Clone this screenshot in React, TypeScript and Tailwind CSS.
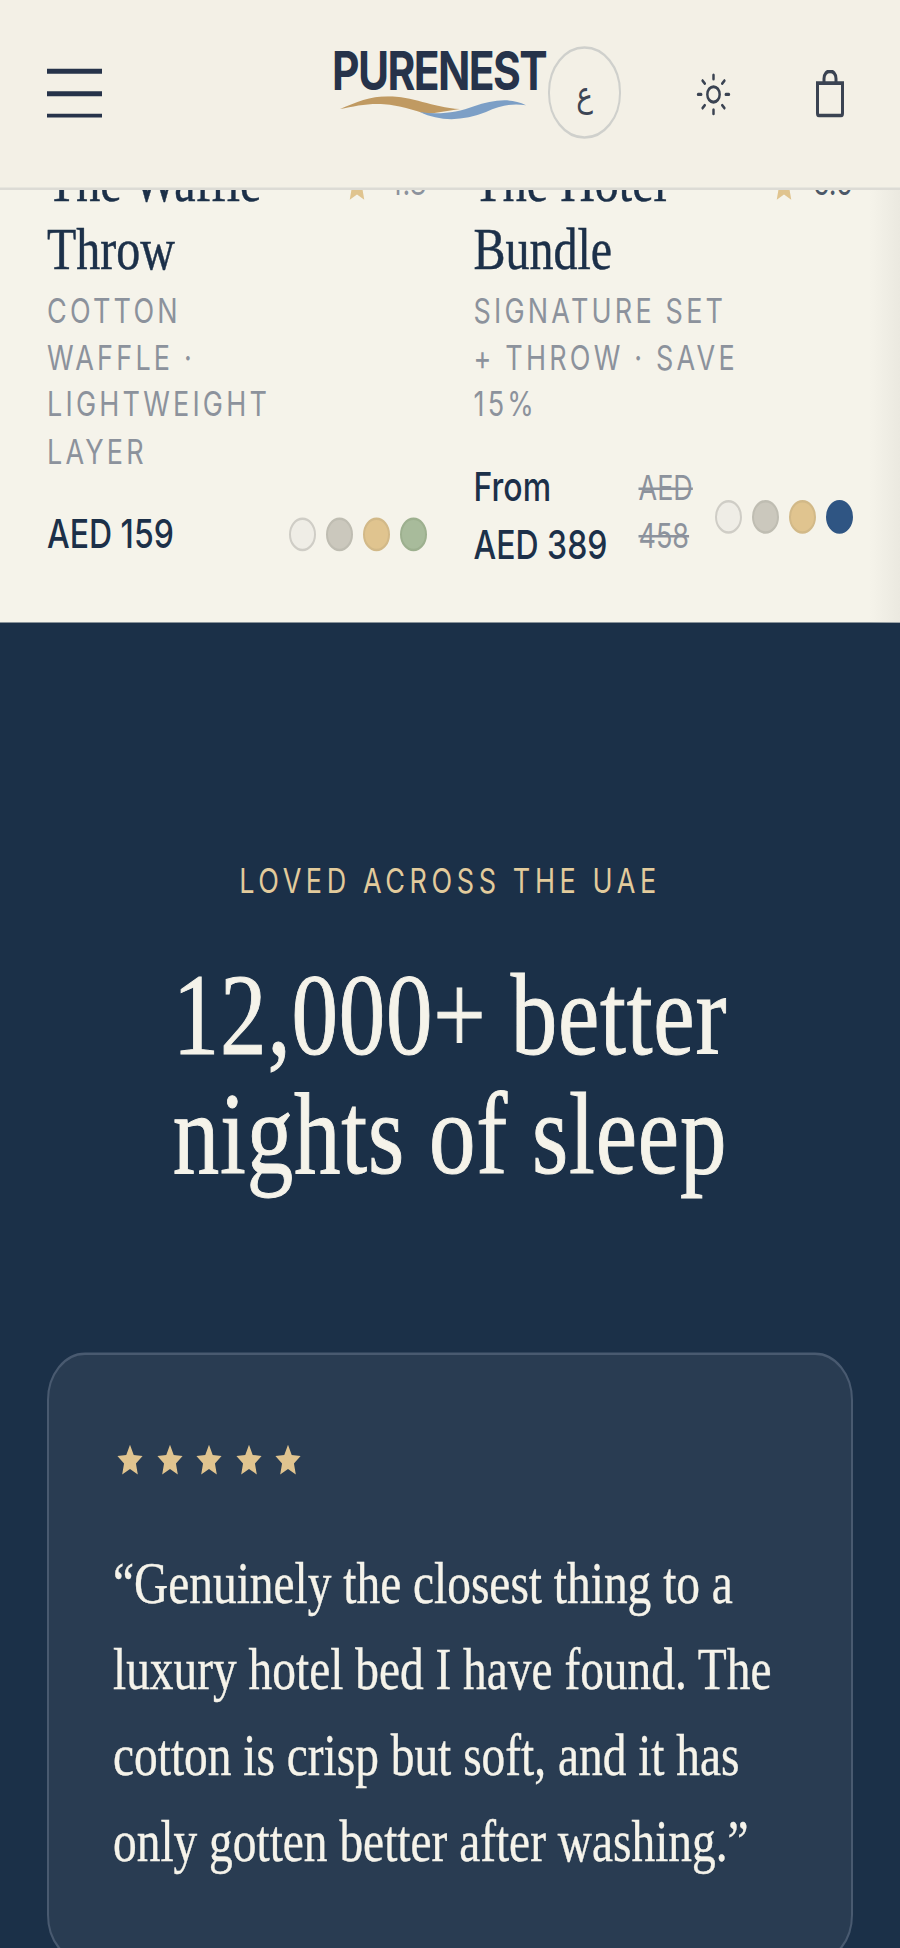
import React from "react";
import { Sun } from "lucide-react";

const serif = "font-['Liberation_Serif',serif]";
const sans = "font-['Inter',sans-serif]";

function Star({ className }: { className: string }) {
  return (
    <svg viewBox="0 0 24 24" className={className} fill="currentColor">
      <path d="M12 1.5l3.2 7 7.6.8-5.7 5.1 1.6 7.5L12 18.1l-6.7 3.8 1.6-7.5L1.2 9.3l7.6-.8z" />
    </svg>
  );
}

function Swatch({ c }: { c: string }) {
  return <span className={`block h-[27px] w-[27px] shrink-0 rounded-full border-2 ${c}`} />;
}

function Product({
  title,
  rating,
  ratingColor,
  sub,
  price,
  was,
  last,
}: {
  title: string;
  rating: string;
  ratingColor: string;
  sub: string;
  price: string;
  was?: string;
  last: string;
}) {
  return (
    <article className="min-w-0">
      <div className="flex items-start justify-between">
        <h3 className={`${serif} w-[240px] text-[48px] leading-[54px] text-[#1c3049] [-webkit-text-stroke:0.4px]`}>{title}</h3>
        <div className={`${sans} flex items-center gap-[16px] pt-[11px] text-[27px] leading-[36px] ${ratingColor}`}>
          <Star className="mt-[4px] h-[26px] w-[26px] text-[#e0c48f]" />
          <span>{rating}</span>
        </div>
      </div>
      <p className={`${sans} mt-[4px] w-[265px] text-[27px] leading-[37.6px] tracking-[3.2px] text-[#8c929c]`}>{sub}</p>
      <div className="mt-[24px] flex items-center justify-between">
        <div className={`${sans} flex items-center`}>
          <span className="w-[165px] pr-[28px] text-[32px] leading-[46.6px] font-medium text-[#1c3049]">{price}</span>
          {was && <s className="mb-[6px] w-[60px] text-[27px] leading-[38.4px] text-[#8c929c]">{was}</s>}
        </div>
        <div className="flex gap-[10px]">
          <Swatch c="border-[#cfcdc6] bg-[#efede6]" />
          <Swatch c="border-[#bfbdb2] bg-[#cbc8bd]" />
          <Swatch c="border-[#d2b988] bg-[#e0c48f]" />
          <Swatch c={last} />
        </div>
      </div>
    </article>
  );
}

export default function App() {
  return (
    <div className="h-[1948px] w-[900px] overflow-hidden bg-[#1b3048]">
      <div className="relative h-[1558.4px] origin-top scale-y-[1.25]">
        <header className="absolute inset-x-0 top-0 z-10 flex h-[152px] items-start border-b-2 border-[#dcdbd5] bg-[#f3f0e6] px-[47px] pt-[38px]">
          <div className="mt-[17px] flex w-[55px] shrink-0 flex-col gap-[14px]">
            <span className="h-[4px] bg-[#26334a]" />
            <span className="h-[4px] bg-[#26334a]" />
            <span className="h-[2.5px] bg-[#26334a]" />
          </div>
          <div className="ml-[230px] w-[216px] shrink-0">
            <div className={`${sans} -mt-[1px] text-[42.5px] leading-[40px] font-bold tracking-[-1.6px] whitespace-nowrap text-[#26334a]`}>PURENEST</div>
            <svg viewBox="0 0 186 24" preserveAspectRatio="none" className="ml-[8px] h-[19px] w-[186px]">
              <path d="M0 13C16 6 30 0 48 0c24 0 44 11 72 13l-32 5C72 14 60 9 44 8 28 7 14 10 0 13z" fill="#c09a62" />
              <path d="M80 16c20 3 38 0 54-6 18-6 36-9 52-1-14-2-26 0-40 7-22 9-46 10-66 0z" fill="#7c9fc6" />
            </svg>
          </div>
          <button className="-mt-[1px] flex h-[74px] w-[73px] shrink-0 items-center justify-center rounded-full border-2 border-[#cfd0cc] pt-[4px] font-['DejaVu_Sans',sans-serif] text-[28px] text-[#3c4554]">
            ع
          </button>
          <Sun className="mt-[19px] ml-[74px] h-[37px] w-[37px] shrink-0 text-[#3a4352]" strokeWidth={1.6} />
          <svg viewBox="0 0 28 38" className="mt-[18px] ml-[84px] h-[38px] w-[28px] shrink-0" fill="none" stroke="#3a4352" strokeWidth="3">
            <path d="M8 11V7c0-8 12-8 12 0v4" />
            <path d="M1.5 10.5h25v24c0 1.5-1 2-2 2h-21c-1 0-2-.5-2-2z" />
          </svg>
        </header>

        <section className="relative h-[498px] overflow-hidden bg-[#f5f3ea] px-[47px] pt-[118px]">
          <div className="grid grid-cols-2 gap-[47px]">
            <Product
              title="The Waffle Throw"
              rating="4.8"
              ratingColor="text-[#8c929c]"
              sub="COTTON WAFFLE · LIGHTWEIGHT LAYER"
              price="AED 159"
              last="border-[#9db08f] bg-[#a8bb9b]"
            />
            <Product
              title="The Hotel Bundle"
              rating="5.0"
              ratingColor="text-[#4c5868]"
              sub="SIGNATURE SET + THROW · SAVE 15%"
              price="From AED 389"
              was="AED 458"
              last="border-[#2f5583] bg-[#2f5583]"
            />
          </div>
          <span className="absolute inset-y-0 right-0 w-[30px] bg-gradient-to-l from-[#ebe9e0] to-transparent" />
        </section>

        <section className="px-[47px] pt-[191px]">
          <p className={`${sans} text-center text-[27px] leading-[32px] tracking-[4.6px] text-[#e2cb9c]`}>LOVED ACROSS THE UAE</p>
          <h2 className={`${serif} mt-[43px] text-center text-[93px] leading-[95px] tracking-[0.8px] text-[#f5f3ea] [-webkit-text-stroke:0.8px]`}>
            12,000+ better
            <br />
            nights of sleep
          </h2>
          <div className="mt-[128px] rounded-[38px] border-2 border-[#495a70] bg-[#293c52] px-[64px] pt-[70px] pb-[60px]">
            <div className="ml-[3px] flex gap-[11.5px] text-[#e0c48f]">
              {[0, 1, 2, 3, 4].map((i) => (
                <Star key={i} className="h-[28px] w-[28px]" />
              ))}
            </div>
            <p className={`${serif} mt-[50px] text-[47.4px] leading-[69px] text-[#f5f3ea] [-webkit-text-stroke:0.3px]`}>
              “Genuinely the closest thing to a luxury hotel bed I have found. The cotton is crisp but soft, and it has only gotten better after washing.”
            </p>
          </div>
        </section>
      </div>
    </div>
  );
}
